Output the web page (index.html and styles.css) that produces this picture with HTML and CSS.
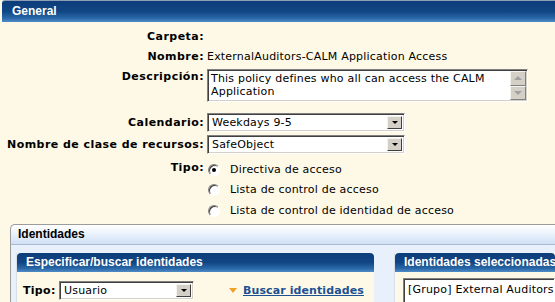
FILE: index.html
```html
<!DOCTYPE html>
<html>
<head>
<meta charset="utf-8">
<link rel="stylesheet" href="styles.css">
</head>
<body>
<div class="page">
  <div class="sec-head">General</div>
  <div class="form">
    <div class="lbl">Carpeta:</div>
    <div class="val"></div>

    <div class="lbl">Nombre:</div>
    <div class="val">ExternalAuditors-CALM Application Access</div>

    <div class="lbl lbl-top">Descripción:</div>
    <div class="val val-ta">
      <div class="textarea">
        <div class="ta-text">This policy defines who all can access the CALM Application</div>
        <div class="ta-scroll">
          <div class="sbtn"><span class="arr-up"></span></div>
          <div class="sbtn"><span class="arr-down"></span></div>
        </div>
      </div>
    </div>

    <div class="lbl lbl-cal">Calendario:</div>
    <div class="val val-cal">
      <div class="select sel-wide"><span class="sel-text">Weekdays 9-5</span><span class="sel-btn"><span class="tri"></span></span></div>
    </div>

    <div class="lbl lbl-res">Nombre de clase de recursos:</div>
    <div class="val val-res">
      <div class="select sel-wide"><span class="sel-text">SafeObject</span><span class="sel-btn"><span class="tri"></span></span></div>
    </div>

    <div class="lbl lbl-tipo">Tipo:</div>
    <div class="val radios">
      <div class="radio-row"><span class="radio checked"></span><span>Directiva de acceso</span></div>
      <div class="radio-row"><span class="radio"></span><span>Lista de control de acceso</span></div>
      <div class="radio-row"><span class="radio"></span><span>Lista de control de identidad de acceso</span></div>
    </div>
  </div>

  <div class="ident">
    <div class="ident-head">Identidades</div>
    <div class="ident-body">
      <div class="panel panel-left">
        <div class="panel-head">Especificar/buscar identidades</div>
        <div class="panel-body search-row">
          <span class="lbl-inline">Tipo:</span>
          <div class="select sel-type"><span class="sel-text">Usuario</span><span class="sel-btn"><span class="tri"></span></span></div>
          <span class="orange-tri"></span>
          <a class="link" href="#">Buscar identidades</a>
        </div>
      </div>
      <div class="panel panel-right">
        <div class="panel-head">Identidades seleccionadas</div>
        <div class="panel-body list-wrap">
          <div class="listbox">[Grupo] External Auditors</div>
        </div>
      </div>
    </div>
  </div>
</div>
</body>
</html>
```

FILE: styles.css
```css
html, body {
  margin: 0;
  padding: 0;
  background: #fef9e7;
  overflow: hidden;
}
body {
  width: 555px;
  height: 302px;
  font-family: "DejaVu Sans", Verdana, sans-serif;
  font-size: 11px;
  color: #000;
}
.page {
  width: 555px;
  height: 302px;
  overflow: hidden;
}
.sec-head {
  margin-left: 2px;
  height: 21px;
  border-top: 1px solid #8d9db3;
  border-top-left-radius: 3px;
  background: linear-gradient(to bottom, #0d3d7a 0%, #114684 50%, #2a68a8 82%, #4f8cc7 100%);
  color: #fff;
  font-family: "Liberation Sans", Arial, sans-serif;
  font-weight: bold;
  font-size: 12px;
  line-height: 20px;
  padding-left: 10px;
}
.form {
  display: grid;
  grid-template-columns: 204px 1fr;
  column-gap: 3px;
  padding-top: 5px;
}
.lbl {
  text-align: right;
  font-weight: bold;
  height: 20px;
  line-height: 20px;
  letter-spacing: 0.45px;
}
.val {
  height: 20px;
  line-height: 20px;
  letter-spacing: 0.2px;
}
.lbl-top {
  margin-top: 2px;
  line-height: 16px;
}
.val-ta {
  height: auto;
  margin-top: 2px;
}
.textarea {
  width: 317px;
  height: 29px;
  background: #fff;
  border: 1px solid;
  border-color: #808080 #ffffff #ffffff #808080;
  box-shadow: inset 1px 1px 0 #404040, inset -1px -1px 0 #d4d0c8;
  display: flex;
  padding: 1px;
}
.ta-text {
  flex: 1;
  line-height: 13px;
  padding: 1px 0 0 2px;
}
.ta-scroll {
  width: 16px;
  display: flex;
  flex-direction: column;
}
.sbtn {
  flex: 1;
  background: #d4d0c8;
  border: 1px solid;
  border-color: #f4f3ee #808080 #808080 #f4f3ee;
  box-sizing: border-box;
  display: flex;
  align-items: center;
  justify-content: center;
}
.arr-up {
  width: 0; height: 0;
  border-left: 4px solid transparent;
  border-right: 4px solid transparent;
  border-bottom: 4px solid #a0a0a0;
}
.arr-down {
  width: 0; height: 0;
  border-left: 4px solid transparent;
  border-right: 4px solid transparent;
  border-top: 4px solid #a0a0a0;
}
.lbl-cal {
  margin-top: 11px;
}
.val-cal {
  margin-top: 11px;
  height: 19px;
}
.lbl-res, .val-res {
  margin-top: 2px;
}
.select {
  background: #fff;
  border: 1px solid;
  border-color: #808080 #ffffff #ffffff #808080;
  box-shadow: inset 1px 1px 0 #404040, inset -1px -1px 0 #d4d0c8;
  box-sizing: border-box;
  display: flex;
  align-items: center;
  padding: 2px;
  height: 19px;
}
.sel-wide {
  width: 198px;
}
.sel-text {
  flex: 1;
  padding-left: 2px;
  line-height: 13px;
  letter-spacing: 0.2px;
}
.sel-btn {
  width: 15px;
  height: 13px;
  background: #d4d0c8;
  border: 1px solid;
  border-color: #f4f3ee #404040 #404040 #f4f3ee;
  box-sizing: border-box;
  display: flex;
  align-items: center;
  justify-content: center;
}
.tri {
  width: 0; height: 0;
  border-left: 3px solid transparent;
  border-right: 3px solid transparent;
  border-top: 3px solid #000;
}
.lbl-tipo {
  margin-top: 5px;
  line-height: 16px;
}
.radios {
  height: auto;
  margin-top: 5px;
}
.radio-row {
  display: flex;
  align-items: center;
  height: 20px;
  gap: 5px;
}
.radio-row:last-child {
  height: 21px;
}
.radio {
  width: 12px;
  height: 12px;
  box-sizing: border-box;
  border-radius: 50%;
  background: #fff;
  border: 1px solid;
  border-color: #808080 #ffffff #ffffff #808080;
  box-shadow: inset 1px 1px 0 #404040;
  display: flex;
  align-items: center;
  justify-content: center;
  margin-left: 1px;
  margin-right: 5px;
}
.radio.checked::after {
  content: "";
  width: 4px;
  height: 4px;
  border-radius: 50%;
  background: #000;
}
.ident {
  margin-top: 3px;
  margin-left: 10px;
  border-top: 1px solid #9c9c9c;
  border-left: 1px solid #9c9c9c;
  border-top-left-radius: 5px;
  background: #e8f0fb;
  height: 78px;
  overflow: hidden;
}
.ident-head {
  height: 19px;
  line-height: 19px;
  padding-left: 7px;
  background: linear-gradient(to bottom, #ffffff 0%, #eef4fc 40%, #cfe0f6 100%);
  border-top-left-radius: 5px;
  border-bottom: 1px solid #a9bad0;
  font-family: "Liberation Sans", Arial, sans-serif;
  font-weight: bold;
  font-size: 12px;
}
.ident-body {
  display: flex;
  gap: 20px;
  padding: 8px 0 0 5px;
}
.panel {
  background: #fef9e7;
  border-left: 1px solid #d9dfe8;
}
.panel-left {
  flex: none;
  width: 357px;
}
.panel-right {
  flex: 1;
  min-width: 0;
  overflow: hidden;
}
.panel-head {
  height: 19px;
  line-height: 19px;
  padding-left: 9px;
  background: linear-gradient(to bottom, #0d3d7a 0%, #114684 50%, #2a68a8 82%, #4f8cc7 100%);
  border-radius: 4px 4px 0 0;
  color: #fff;
  font-family: "Liberation Sans", Arial, sans-serif;
  font-weight: bold;
  font-size: 12px;
  white-space: nowrap;
  overflow: hidden;
}
.search-row {
  display: flex;
  align-items: center;
  height: 36px;
  padding-left: 6px;
}
.lbl-inline {
  font-weight: bold;
  width: 36px;
  letter-spacing: 0.3px;
}
.sel-type {
  width: 135px;
}
.orange-tri {
  margin-left: 35px;
  width: 0; height: 0;
  border-left: 4px solid transparent;
  border-right: 4px solid transparent;
  border-top: 5px solid #f4a028;
  margin-right: 6px;
}
.link {
  color: #1d5192;
  font-weight: bold;
  text-decoration: underline;
  letter-spacing: 0.1px;
}
.list-wrap {
  padding: 6px 0 0 8px;
  height: 40px;
}
.listbox {
  background: #fff;
  border: 1px solid;
  border-color: #808080 #ffffff #ffffff #808080;
  box-shadow: inset 1px 1px 0 #404040;
  height: 40px;
  padding: 3px 0 0 4px;
  line-height: 16px;
  letter-spacing: 0.2px;
  white-space: nowrap;
}
```
